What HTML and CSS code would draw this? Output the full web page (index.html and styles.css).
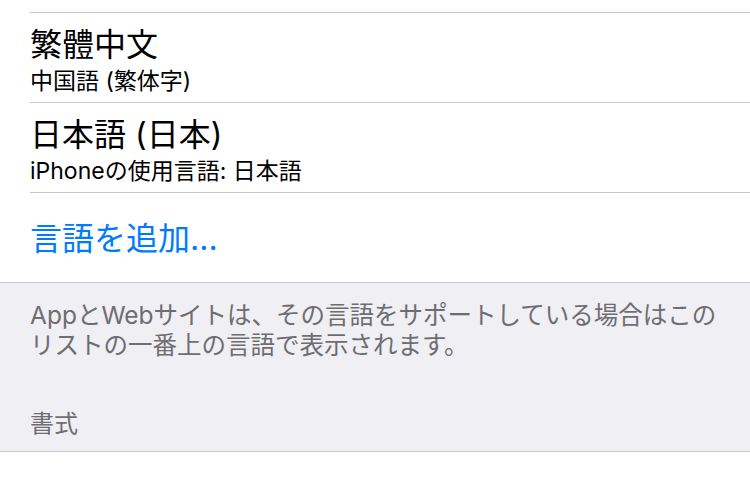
FILE: index.html
```html
<!DOCTYPE html>
<html lang="ja">
<head>
<meta charset="utf-8">
<link rel="stylesheet" href="styles.css">
</head>
<body>
<div class="screen">
  <div class="group">
    <div class="top-gap"></div>
    <div class="cell">
      <div class="title">繁體中文</div>
      <div class="subtitle">中国語 (繁体字)</div>
    </div>
    <div class="cell">
      <div class="title">日本語 (日本)</div>
      <div class="subtitle">iPhoneの使用言語: 日本語</div>
    </div>
    <div class="cell cell-action">
      <div class="action">言語を追加...</div>
    </div>
  </div>
  <div class="section-gap">
    <p class="footer">AppとWebサイトは、その言語をサポートしている場合はこの<br>リストの一番上の言語で表示されます。</p>
    <div class="header">書式</div>
  </div>
  <div class="group-bottom"></div>
</div>
</body>
</html>
```
FILE: styles.css
```css
html, body {
  margin: 0;
  padding: 0;
  background: #ffffff;
}
body {
  font-family: Inter, "Noto Sans CJK JP", sans-serif;
  width: 750px;
  height: 480px;
  overflow: hidden;
}
.screen {
  display: flex;
  flex-direction: column;
}
.group {
  background: #ffffff;
  border-bottom: 1px solid #c8c7cc;
}
.top-gap {
  height: 12px;
}
.cell {
  box-sizing: border-box;
  height: 90px;
  margin-left: 30px;
  border-top: 1px solid #c8c7cc;
  display: flex;
  flex-direction: column;
  padding-top: 14px;
}
.cell-action {
  justify-content: center;
  padding-top: 2px;
}
.title {
  font-size: 32px;
  line-height: 36px;
  color: #000000;
}
.subtitle {
  font-size: 23px;
  line-height: 30px;
  margin-top: 3px;
  color: #000000;
}
.action {
  font-size: 32px;
  line-height: 36px;
  color: #007aff;
}
.section-gap {
  background: #efeff4;
  padding: 17px 30px 12px 30px;
  border-bottom: 1px solid #c8c7cc;
}
.footer {
  margin: 0;
  font-size: 24.5px;
  line-height: 30px;
  color: #6d6d72;
  white-space: nowrap;
}
.header {
  margin-top: 49px;
  font-size: 24px;
  line-height: 30px;
  color: #6d6d72;
}
.group-bottom {
  height: 40px;
  background: #ffffff;
}
```
